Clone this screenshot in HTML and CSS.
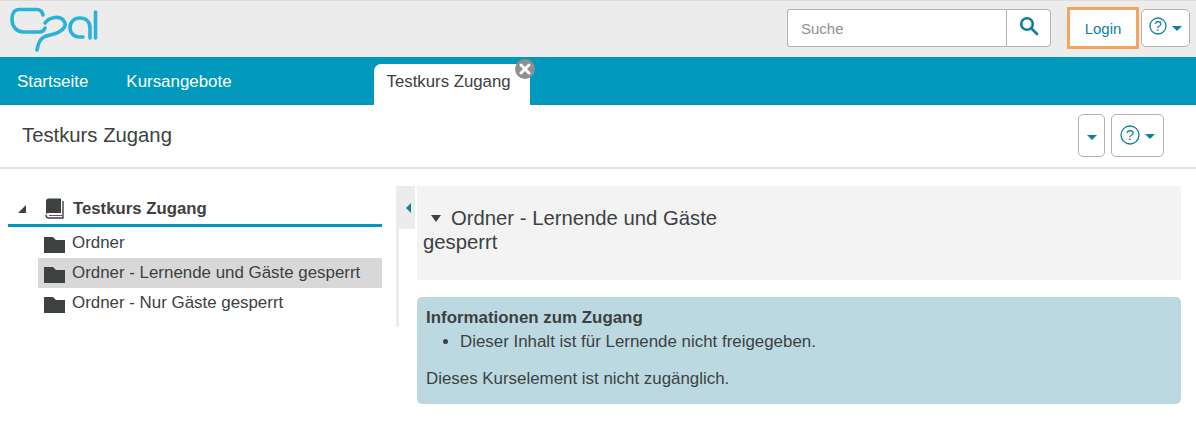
FILE: index.html
```html
<!DOCTYPE html>
<html lang="de">
<head>
<meta charset="utf-8">
<title>Opal</title>
<link rel="stylesheet" href="styles.css">
</head>
<body>
<header class="topbar">
  <svg class="logo" width="90" height="46" viewBox="0 0 90 46" fill="none" stroke="#29b3d9" stroke-width="3.600" stroke-linecap="round" stroke-linejoin="round">
    <path d="M33 8C32 4 30 2.500 27 2.500H9C4 2.500 2 7 2 12C2 20 7 25 13 25H29C32 25 34 24 35 21"/>
    <path d="M27 43C28 37 30 32 34 30C38 28 44 28 49 25C54 22 56 19 55 16C53 11 49 10 45 10.500C41 11 37 13 35 16"/>
    <path d="M73 30H69C64 30 60 26 60 20.500C60 15 64 11 70 11C76 11 80 15 80 21V31"/>
    <path d="M85.500 5V31"/>
  </svg>
  <div class="top-actions">
    <form class="search">
      <input class="search-input" type="text" placeholder="Suche">
      <button class="search-btn" type="button" aria-label="Suche">
        <svg width="20" height="20" viewBox="0 0 20 20" fill="none" stroke="#0f7f9c" stroke-width="2.600" stroke-linecap="round"><circle cx="8" cy="8" r="5.800"/><path d="M12.500 12.500L18 18"/></svg>
      </button>
    </form>
    <a class="login" href="#">Login</a>
    <button class="btn help-top" type="button" aria-label="Hilfe">
      <svg class="help-icon" width="18" height="18" viewBox="0 0 18 18"><circle cx="9" cy="9" r="8" fill="none" stroke="#0f7f9c" stroke-width="1.300"/><text x="9" y="13.500" text-anchor="middle" class="help-q">?</text></svg>
      <span class="caret"></span>
    </button>
  </div>
</header>

<nav class="nav">
  <a class="nav-link first" href="#">Startseite</a>
  <a class="nav-link second" href="#">Kursangebote</a>
  <div class="tab">
    <span>Testkurs Zugang</span>
    <span class="tab-close" aria-label="Schließen">
      <svg width="12" height="12" viewBox="0 0 12 12" stroke="#fff" stroke-width="3" stroke-linecap="round"><path d="M2 2L10 10M10 2L2 10"/></svg>
    </span>
  </div>
</nav>

<div class="subheader">
  <h1 class="course-title">Testkurs Zugang</h1>
  <div class="sub-actions">
    <button class="btn sub-caret" type="button" aria-label="Menü"><span class="caret"></span></button>
    <button class="btn sub-help" type="button" aria-label="Hilfe">
      <svg class="help-icon" width="20" height="20" viewBox="0 0 20 20"><circle cx="10" cy="10" r="9" fill="none" stroke="#0f7f9c" stroke-width="1.300"/><text x="10" y="15" text-anchor="middle" class="help-q large">?</text></svg>
      <span class="caret"></span>
    </button>
  </div>
</div>

<main class="main">
  <aside class="tree">
    <div class="tree-root">
      <span class="tree-arrow"></span>
      <svg class="book" width="20" height="21" viewBox="0 0 20 21"><path d="M1 3C1 1.500 2 .500 3.500 .500H16V15H3.500C2.300 15 1 15.500 1 17Z" fill="#3d4142"/><path d="M1 17C1 18.800 2.300 20 4 20H18V3" fill="none" stroke="#3d4142" stroke-width="1.400"/><path d="M4 17.500H17" stroke="#5b4a9c" stroke-width="1"/></svg>
      <span>Testkurs Zugang</span>
    </div>
    <ul class="tree-list">
      <li class="tree-item"><svg class="folder" width="21" height="16" viewBox="0 0 21 16"><path d="M0 0H9L12 3H21V16H0Z" fill="#3d4142"/></svg>Ordner</li>
      <li class="tree-item selected"><svg class="folder" width="21" height="16" viewBox="0 0 21 16"><path d="M0 0H9L12 3H21V16H0Z" fill="#3d4142"/></svg>Ordner - Lernende und Gäste gesperrt</li>
      <li class="tree-item"><svg class="folder" width="21" height="16" viewBox="0 0 21 16"><path d="M0 0H9L12 3H21V16H0Z" fill="#3d4142"/></svg>Ordner - Nur Gäste gesperrt</li>
    </ul>
  </aside>

  <div class="splitter">
    <div class="toggle"><span class="toggle-arrow"></span></div>
  </div>

  <section class="content">
    <div class="node-title">
      <h2 class="node-heading"><span class="node-arrow"></span>Ordner - Lernende und Gäste<br>gesperrt</h2>
    </div>
    <div class="info">
      <strong class="info-title">Informationen zum Zugang</strong>
      <ul class="info-list"><li>Dieser Inhalt ist für Lernende nicht freigegeben.</li></ul>
      <p class="info-text">Dieses Kurselement ist nicht zugänglich.</p>
    </div>
  </section>
</main>
</body>
</html>
```

FILE: styles.css
```css
* { box-sizing: border-box; }
html, body { margin: 0; padding: 0; }
body {
  width: 1196px;
  height: 438px;
  overflow: hidden;
  background: #fff;
  color: #3d4142;
  font-family: "Liberation Sans", Arial, sans-serif;
  font-size: 16.900px;
}

.topbar {
  height: 57px;
  background: #ececec;
  border-top: 1px solid #dcdcdc;
  display: flex;
  align-items: flex-start;
  justify-content: space-between;
  padding: 6px 6px 0 10px;
}
.logo { display: block; }
.top-actions { display: flex; align-items: center; height: 42px; }
.search { display: flex; margin: 0 16px 0 0; height: 38px; }
.search-input {
  width: 219px;
  height: 38px;
  border: 1px solid #b3b3b3;
  border-right: 0;
  border-radius: 3px 0 0 3px;
  padding: 0 13px;
  font: 15px "Liberation Sans", Arial, sans-serif;
  background: #fff;
  outline: 0;
}
.search-input::placeholder { color: #8f8f8f; opacity: 1; }
.search-btn {
  width: 45px;
  height: 38px;
  padding: 0 0 4px;
  background: #fff;
  border: 1px solid #b3b3b3;
  border-radius: 0 4px 4px 0;
  display: flex;
  align-items: center;
  justify-content: center;
}
.login {
  width: 72px;
  height: 42px;
  border: 3px solid #f3a55e;
  background: #fff;
  color: #0f7f9c;
  font-size: 15px;
  text-decoration: none;
  display: flex;
  align-items: center;
  justify-content: center;
  margin-right: 2px;
}
.btn {
  background: #fff;
  border: 1px solid #b3b3b3;
  border-radius: 5px;
  padding: 0;
  display: flex;
  align-items: center;
  justify-content: center;
}
.help-top { width: 49px; height: 38px; gap: 5px; padding-bottom: 4px; }
.caret {
  display: block;
  width: 0;
  height: 0;
  border-left: 5px solid transparent;
  border-right: 5px solid transparent;
  border-top: 5px solid #0f7f9c;
  margin-top: 4px;
}
.help-icon { display: block; }
.help-q { font: 14px "Liberation Sans", Arial, sans-serif; fill: #0f7f9c; }
.help-q.large { font-size: 15px; }

.nav {
  height: 48px;
  background: #0099bd;
  display: flex;
  align-items: flex-start;
}
.nav-link {
  color: #fff;
  font-size: 16.900px;
  text-decoration: none;
  line-height: 50px;
}
.nav-link.first { margin-left: 17px; }
.nav-link.second { margin-left: 38px; }
.tab {
  position: relative;
  margin: 7px 0 0 142px;
  width: 156px;
  height: 41px;
  background: #fff;
  border-radius: 7px 0 0 0;
  padding-left: 13px;
  line-height: 36px;
  font-size: 16.800px;
  color: #3d4142;
}
.tab-close {
  position: absolute;
  top: -5px;
  right: -5px;
  width: 20px;
  height: 20px;
  border-radius: 50%;
  background: #8f8f8f;
  display: flex;
  align-items: center;
  justify-content: center;
}

.subheader {
  height: 64px;
  border-bottom: 2px solid #e0e0e0;
  display: flex;
  justify-content: space-between;
  padding: 9px 32px 0 22px;
}
.course-title {
  margin: 0;
  font-size: 20.300px;
  font-weight: 400;
  line-height: 42px;
  color: #3d4142;
}
.sub-actions { display: flex; gap: 6px; }
.sub-caret { width: 27px; height: 43px; }
.sub-help { width: 53px; height: 43px; gap: 5px; padding-bottom: 2px; }

.main {
  display: flex;
  align-items: flex-start;
  padding: 17px 15px 0 8px;
}
.tree { width: 374px; padding-top: 7px; }
.tree-root {
  height: 34px;
  border-bottom: 3px solid #0099bd;
  display: flex;
  align-items: center;
  font-weight: 700;
  font-size: 16.750px;
}
.tree-arrow {
  width: 0;
  height: 0;
  margin-left: 10px;
  border-left: 8px solid transparent;
  border-bottom: 8px solid #3d4142;
}
.book { margin: 0 8px 0 19px; }
.tree-list { list-style: none; margin: 1px 0 0; padding: 0; }
.tree-item {
  height: 30px;
  margin-left: 30px;
  padding-left: 6px;
  display: flex;
  align-items: center;
  line-height: 30px;
}
.tree-item.selected { background: #d8d8d8; }
.folder { margin: 4px 7px 0 0; }

.splitter {
  width: 3px;
  height: 141px;
  margin-left: 14px;
  background: #ececec;
  position: relative;
}
.toggle {
  position: absolute;
  top: 0;
  left: 0;
  width: 19px;
  height: 43px;
  background: #ececec;
  display: flex;
  align-items: center;
  justify-content: center;
  padding-left: 6px;
}
.toggle-arrow {
  width: 0;
  height: 0;
  border-top: 5px solid transparent;
  border-bottom: 5px solid transparent;
  border-right: 5px solid #0f7f9c;
}

.content { margin-left: 18px; width: 764px; }
.node-title {
  height: 94px;
  background: #f3f3f3;
  padding: 20px 5px 0 6px;
}
.node-heading {
  margin: 0;
  font-size: 20.300px;
  font-weight: 400;
  line-height: 24px;
  color: #3d4142;
}
.node-arrow {
  display: inline-block;
  width: 0;
  height: 0;
  margin: 0 10px 3px 8px;
  border-left: 5.500px solid transparent;
  border-right: 5.500px solid transparent;
  border-top: 7px solid #3d4142;
  vertical-align: middle;
}
.info {
  margin-top: 17px;
  height: 107px;
  background: #bcd9e1;
  border-radius: 5px;
  padding: 11px 9px 0;
  line-height: 20px;
}
.info-title { display: block; }
.info-list { margin: 2px 0 0; padding-left: 34px; line-height: 24px; }
.info-text { margin: 13px 0 0; line-height: 24px; }
```
